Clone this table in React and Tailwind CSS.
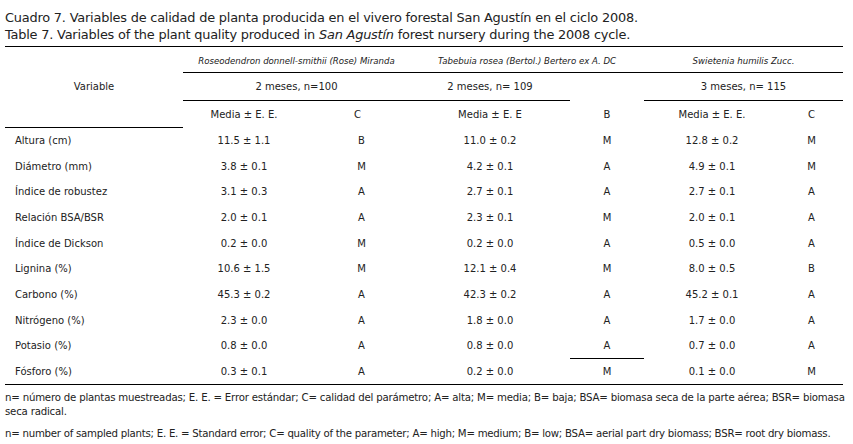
import React from 'react';

const rows = [
  ['Altura (cm)', '11.5 ± 1.1', 'B', '11.0 ± 0.2', 'M', '12.8 ± 0.2', 'M'],
  ['Diámetro (mm)', '3.8 ± 0.1', 'M', '4.2 ± 0.1', 'A', '4.9 ± 0.1', 'M'],
  ['Índice de robustez', '3.1 ± 0.3', 'A', '2.7 ± 0.1', 'A', '2.7 ± 0.1', 'A'],
  ['Relación BSA/BSR', '2.0 ± 0.1', 'A', '2.3 ± 0.1', 'M', '2.0 ± 0.1', 'A'],
  ['Índice de Dickson', '0.2 ± 0.0', 'M', '0.2 ± 0.0', 'A', '0.5 ± 0.0', 'A'],
  ['Lignina (%)', '10.6 ± 1.5', 'M', '12.1 ± 0.4', 'M', '8.0 ± 0.5', 'B'],
  ['Carbono (%)', '45.3 ± 0.2', 'A', '42.3 ± 0.2', 'A', '45.2 ± 0.1', 'A'],
  ['Nitrógeno (%)', '2.3 ± 0.0', 'A', '1.8 ± 0.0', 'A', '1.7 ± 0.0', 'A'],
  ['Potasio (%)', '0.8 ± 0.0', 'A', '0.8 ± 0.0', 'A', '0.7 ± 0.0', 'A'],
  ['Fósforo (%)', '0.3 ± 0.1', 'A', '0.2 ± 0.0', 'M', '0.1 ± 0.0', 'M'],
];

export default function App() {
  return (
    <div className="w-[853px] h-[444px] bg-white text-[#222] font-['DejaVu_Sans',sans-serif] overflow-hidden">
      <div className="pl-[5px] pt-[9px] text-[12.9px] leading-[17px] tracking-[-0.2px] whitespace-nowrap">
        <p>Cuadro 7. Variables de calidad de planta producida en el vivero forestal San Agustín en el ciclo 2008.</p>
        <p>Table 7. Variables of the plant quality produced in <i>San Agustín</i> forest nursery during the 2008 cycle.</p>
      </div>

      <table className="ml-[5px] mt-[3px] w-[838px] border-collapse table-fixed text-[10px] border-t border-b border-black">
        <colgroup>
          <col className="w-[178px]" />
          <col className="w-[122px]" />
          <col className="w-[105px]" />
          <col className="w-[160px]" />
          <col className="w-[74px]" />
          <col className="w-[136px]" />
          <col className="w-[63px]" />
        </colgroup>
        <thead>
          <tr className="h-[26px]">
            <td></td>
            <td colSpan={2} className="pt-[4px] text-center text-[8.6px] italic border-b border-black">
              Roseodendron donnell-smithii (Rose) Miranda
            </td>
            <td colSpan={2} className="pt-[4px] text-center text-[8.6px] italic border-b border-black">
              Tabebuia rosea (Bertol.) Bertero ex A. DC
            </td>
            <td colSpan={2} className="pt-[4px] text-center text-[8.6px] italic border-b border-black">
              Swietenia humilis Zucc.
            </td>
          </tr>
          <tr className="h-[28px]">
            <td className="text-center">Variable</td>
            <td colSpan={2} className="text-center border-b border-black">2 meses, n=100</td>
            <td className="text-center border-b border-black">2 meses, n= 109</td>
            <td></td>
            <td colSpan={2} className="text-center border-b border-black">3 meses, n= 115</td>
          </tr>
          <tr className="h-[27px]">
            <td className="border-b border-black"></td>
            <td className="text-center">Media ± E. E.</td>
            <td className="text-center">C</td>
            <td className="text-center">Media ± E. E</td>
            <td className="text-center">B</td>
            <td className="text-center">Media ± E. E.</td>
            <td className="text-center">C</td>
          </tr>
        </thead>
        <tbody>
          {rows.map((r, i) => (
            <tr key={r[0]} className="h-[25.7px]">
              <td className="pl-[10px]">{r[0]}</td>
              <td className="text-center">{r[1]}</td>
              <td className="text-center pl-[8px]">{r[2]}</td>
              <td className="text-center">{r[3]}</td>
              <td className={i === 8 ? 'text-center border-b border-black' : 'text-center'}>{r[4]}</td>
              <td className="text-center">{r[5]}</td>
              <td className="text-center">{r[6]}</td>
            </tr>
          ))}
        </tbody>
      </table>

      <div className="pl-[5px] pt-[6px] text-[10.2px] leading-[14px] whitespace-nowrap tracking-[-0.2px]">
        <p>n= número de plantas muestreadas; E. E. = Error estándar; C= calidad del parámetro; A= alta; M= media; B= baja; BSA= biomasa seca de la parte aérea; BSR= biomasa</p>
        <p>seca radical.</p>
        <p className="mt-[8px] tracking-[-0.25px]">n= number of sampled plants; E. E. = Standard error; C= quality of the parameter; A= high; M= medium; B= low; BSA= aerial part dry biomass; BSR= root dry biomass.</p>
      </div>
    </div>
  );
}
